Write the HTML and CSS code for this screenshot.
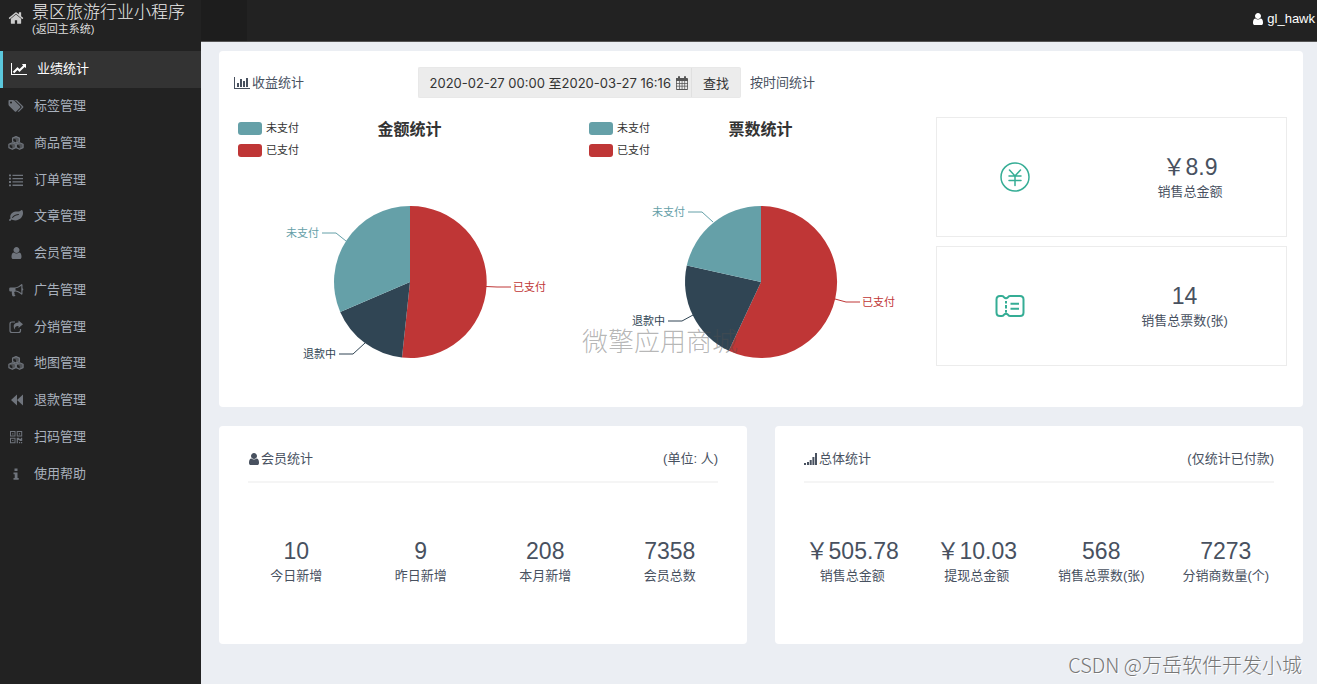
FILE: index.html
```html
<!DOCTYPE html>
<html lang="zh-CN">
<head>
<meta charset="utf-8">
<title>景区旅游行业小程序</title>
<link rel="stylesheet" href="styles.css">
</head>
<body>
<svg class="defs" aria-hidden="true">
  <symbol id="home" viewBox="0 0 1792 1792"><path d="M1472 992v480q0 26-19 45t-45 19h-384v-384h-256v384h-384q-26 0-45-19t-19-45v-480q0-1 .5-3t.5-3l575-474 575 474q1 2 1 6zm223-69l-62 74q-8 9-21 11h-3q-13 0-21-7l-692-577-692 577q-12 8-24 7-13-2-21-11l-62-74q-8-10-7-23.5t11-21.5l719-599q32-26 76-26t76 26l244 204v-195q0-14 9-23t23-9h192q14 0 23 9t9 23v408l219 182q10 8 11 21.5t-7 23.5z"/></symbol>
  <symbol id="user" viewBox="128 128 1408 1536"><path d="M1536 1399q0 109-62.5 187t-150.5 78h-854q-88 0-150.5-78t-62.5-187q0-85 8.5-160.5t31.5-152 58.5-131 94-89 134.5-34.5q131 128 313 128t313-128q76 0 134.5 34.5t94 89 58.5 131 31.5 152 8.5 160.500zm-256-887q0 159-112.5 271.5t-271.5 112.5-271.5-112.5-112.5-271.5 112.5-271.5 271.5-112.5 271.5 112.5 112.5 271.5z"/></symbol>
  <symbol id="line" viewBox="0 0 2048 1792"><path d="M2048 1536v128h-2048v-1536h128v1408h1920zm-128-1248v435q0 21-19.5 29.5t-35.5-7.5l-121-121-633 633q-10 10-23 10t-23-10l-233-233-416 416-192-192 585-585q10-10 23-10t23 10l233 233 464-464-121-121q-16-16-7.5-35.5t29.5-19.5h435q14 0 23 9t9 23z"/></symbol>
  <symbol id="bars" viewBox="0 0 2048 1792"><path d="M640 896v512h-256v-512h256zm384-512v1024h-256v-1024h256zm1024 1152v128h-2048v-1536h128v1408h1920zm-640-896v768h-256v-768h256zm384-384v1152h-256v-1152h256z"/></symbol>
  <symbol id="tags" viewBox="0 0 1920 1792"><path d="M448 448q0-53-37.5-90.5t-90.5-37.5-90.5 37.5-37.5 90.5 37.5 90.5 90.5 37.5 90.5-37.5 37.5-90.5zm1067 576q0 53-37 90l-491 492q-39 37-91 37-53 0-90-37l-715-716q-38-37-64.5-101t-26.5-117v-416q0-52 38-90t90-38h416q53 0 117 26.5t102 64.5l715 714q37 39 37 91zm384 0q0 53-37 90l-491 492q-39 37-91 37-36 0-59-14t-53-45l470-470q37-37 37-90 0-52-37-91l-715-714q-38-38-102-64.5t-117-26.5h224q53 0 117 26.5t102 64.5l715 714q37 39 37 91z"/></symbol>
  <symbol id="leaf" viewBox="0 0 1792 1792"><path d="M1280 704q0-26-19-45t-45-19q-172 0-318 49.5t-259.5 134-235.5 219.5q-19 21-19 45 0 26 19 45t45 19q24 0 45-19 27-24 74-71t67-66q137-124 268.5-176t313.5-52q26 0 45-19t19-45zm512-198q0 95-20 193-46 224-184.5 383t-357.5 268q-214 108-438 108-148 0-286-47-15-5-88-42t-96-37q-16 0-39.5 32t-45 70-52.5 70-60 32q-43 0-63.5-17.5t-45.5-59.5q-2-4-6-11t-5.5-10-3-9.5-1.5-13.5q0-35 31-73.5t68-65.5 68-56 31-48q0-4-14-38t-16-44q-9-51-9-104 0-115 43.5-220t119-184.5 170.5-139 204-95.5q55-18 145-25.5t179.5-9 178.5-6 163.5-24 113.5-56.5l29.5-29.5 29.5-28 27-20 36.5-16 43.5-4.5q39 0 70.5 46t47.5 112 24 124 8 96z"/></symbol>
  <symbol id="cubes" viewBox="0 0 18 16"><g id="cube"><path fill="none" stroke="currentColor" stroke-width="1.4" stroke-linejoin="round" d="M9 .7l3.900 1.700v3.900L9 8.200 5.100 6.300V2.400z"/><path d="M5.100 2.400L9 .7l3.900 1.700L9 4.200zM9 4.200l3.900-1.800v3.900L9 8.200z" opacity=".6"/></g><use href="#cube" x="-4.200" y="7"/><use href="#cube" x="4.200" y="7"/></symbol>
  <symbol id="list" viewBox="0 0 14 14"><path d="M0 1.500h2v1.800H0zM0 4.800h2v1.800H0zM0 8.100h2v1.800H0zM0 11.400h2v1.800H0zM3.500 1.700H14v1.300H3.500zM3.500 5H14v1.300H3.500zM3.500 8.300H14v1.300H3.500zM3.500 11.600H14v1.300H3.500z"/></symbol>
  <symbol id="horn" viewBox="0 0 14 14"><path fill-rule="evenodd" d="M12.600 1q.9 0 .9 1v3.200a1.300 1.300 0 0 1 0 2.400v3.200q0 1-.9 1C10.500 9.900 8.500 8.700 6 8.500c-1 .4-1 1.300-.3 1.900-.6.900.2 1.500 1 2.200-.6 1-2.500 1-3.300.3C3 11.300 2.500 10 2.900 8.400H1.500Q.2 8.400.2 7.200V5.600q0-1.200 1.300-1.200H5.500C8.200 4.400 10.500 3 12.600 1zM12.300 2.700C10.300 4.200 8.500 5.100 6.500 5.300v2.300c2 .2 3.800 1 5.800 2.500z"/></symbol>
  <symbol id="share" viewBox="0 0 14 14"><path fill="none" stroke="currentColor" stroke-width="1.200" d="M6 2H3Q1 2 1 4v6.500q0 2 2 2h6.500q2 0 2-2V9"/><path d="M9.500.5L14 4.300 9.500 8.100V6C6.500 6 5.500 7 6.300 10 3.500 7 4.300 2.600 9.500 2.600z"/></symbol>
  <symbol id="back" viewBox="0 0 14 14"><path d="M8 1.500v11L2 7zM14 1.500v11L8 7z"/></symbol>
  <symbol id="qr" viewBox="0 0 14 14"><path fill-rule="evenodd" d="M1 1h5.500v5.500H1zM2 2v3.500h3.500V2zM7.700 1h5.500v5.500H7.700zM8.700 2v3.500h3.500V2zM1 7.700h5.500v5.500H1zM2 8.700v3.500h3.500V8.700zM3.200 3.200h1.200v1.200H3.200zM9.900 3.200h1.200v1.200H9.900zM3.200 9.900h1.200v1.200H3.200zM7.700 7.700h2.500v1H12v-1h1.200v3.200h-2.700v-1H8.900v3.300H7.700zM10 12h1.200v1.200H10zM12 12h1.200v1.200H12z"/></symbol>
  <symbol id="info" viewBox="0 0 14 14"><path d="M5.500 1.500h3V4h-3zM4.500 5.500h4v5.500h1.200v1.700H4.500V11h1.200V7.200H4.500z"/></symbol>
  <symbol id="signal" viewBox="0 0 13 13"><path d="M0 11h2v2H0zM3 10h2v3H3zM5.700 8h2v5h-2zM8.400 5h2v8h-2zM11 1h2v12h-2z"/></symbol>
  <symbol id="calendar" viewBox="0 0 14 14"><path fill-rule="evenodd" d="M1 2h2V1q0-1 1-1t1 1v1h4V1q0-1 1-1t1 1v1h1q1 0 1 1v10q0 1-1 1H2q-1 0-1-1zM1.800 5v2H4V5zM4.700 5v2h2V5zM7.400 5v2h2V5zM10.100 5v2h2.100V5zM1.800 7.700v2H4v-2zM4.700 7.700v2h2v-2zM7.400 7.700v2h2v-2zM10.100 7.700v2h2.100v-2zM1.800 10.400v2.700H4v-2.700zM4.700 10.400v2.700h2v-2.700zM7.400 10.400v2.700h2v-2.700zM10.100 10.400v2.700h2.100v-2.700z"/></symbol>
</svg>

<aside class="sidebar">
  <a class="brand" href="#">
    <svg class="icon home-icon"><use href="#home"/></svg>
    <span class="brand-text"><span class="brand-name">景区旅游行业小程序</span><span class="brand-sub">(返回主系统)</span></span>
  </a>
  <nav class="menu">
    <a class="item active" href="#"><svg class="icon"><use href="#line"/></svg>业绩统计</a>
    <a class="item" href="#"><svg class="icon"><use href="#tags"/></svg>标签管理</a>
    <a class="item" href="#"><svg class="icon"><use href="#cubes"/></svg>商品管理</a>
    <a class="item" href="#"><svg class="icon"><use href="#list"/></svg>订单管理</a>
    <a class="item" href="#"><svg class="icon"><use href="#leaf"/></svg>文章管理</a>
    <a class="item" href="#"><svg class="icon person"><use href="#user"/></svg>会员管理</a>
    <a class="item" href="#"><svg class="icon"><use href="#horn"/></svg>广告管理</a>
    <a class="item" href="#"><svg class="icon"><use href="#share"/></svg>分销管理</a>
    <a class="item" href="#"><svg class="icon"><use href="#cubes"/></svg>地图管理</a>
    <a class="item" href="#"><svg class="icon"><use href="#back"/></svg>退款管理</a>
    <a class="item" href="#"><svg class="icon"><use href="#qr"/></svg>扫码管理</a>
    <a class="item" href="#"><svg class="icon"><use href="#info"/></svg>使用帮助</a>
  </nav>
</aside>

<div class="page">
  <header class="topbar">
    <button class="toggle" type="button" aria-label="菜单"></button>
    <a class="account" href="#"><svg class="icon narrow"><use href="#user"/></svg>gl_hawk</a>
  </header>

  <main class="main">
    <section class="card income">
      <div class="filters">
        <h2 class="heading"><svg class="icon"><use href="#bars"/></svg>收益统计</h2>
        <div class="controls">
          <div class="group">
            <button class="btn range" type="button">2020-02-27 00:00 至2020-03-27 16:16<svg class="icon calendar"><use href="#calendar"/></svg></button>
            <button class="btn" type="button">查找</button>
          </div>
          <a class="by-time" href="#">按时间统计</a>
        </div>
      </div>
      <div class="columns">
        <div class="chart">
          <div class="chart-head">
            <ul class="legend"><li><i class="swatch teal"></i>未支付</li><li><i class="swatch red"></i>已支付</li></ul>
            <h3 class="chart-title">金额统计</h3>
          </div>
          <svg class="pie" viewBox="-176 -122 351 232">
            <path class="red-fill" d="M0 0V-76A76 76 0 1 1 -8 75.500z"/>
            <path class="navy-fill" d="M0 0L-8 75.500A76 76 0 0 1 -69.800 30z"/>
            <path class="teal-fill" d="M0 0L-69.800 30A76 76 0 0 1 0 -76z"/>
            <path class="lead red-line" d="M76 4.500L87 5H101"/><text class="red-fill" x="103" y="9">已支付</text>
            <path class="lead navy-line" d="M-45 61L-57 72H-71"/><text class="navy-fill end" x="-74" y="76">退款中</text>
            <path class="lead teal-line" d="M-64 -41L-74 -49H-88"/><text class="teal-fill end" x="-91" y="-45">未支付</text>
          </svg>
        </div>
        <div class="chart">
          <div class="chart-head">
            <ul class="legend"><li><i class="swatch teal"></i>未支付</li><li><i class="swatch red"></i>已支付</li></ul>
            <h3 class="chart-title">票数统计</h3>
          </div>
          <svg class="pie" viewBox="-176 -122 351 232">
            <path class="red-fill" d="M0 0V-76A76 76 0 1 1 -32.200 68.800z"/>
            <path class="navy-fill" d="M0 0L-32.200 68.800A76 76 0 0 1 -74.200 -16.400z"/>
            <path class="teal-fill" d="M0 0L-74.200 -16.400A76 76 0 0 1 0 -76z"/>
            <path class="lead red-line" d="M74 17L85 20H99"/><text class="red-fill" x="101" y="24">已支付</text>
            <path class="lead navy-line" d="M-68 33L-79 39H-93"/><text class="navy-fill end" x="-96" y="43">退款中</text>
            <path class="lead teal-line" d="M-48 -60L-59 -70H-73"/><text class="teal-fill end" x="-76" y="-66">未支付</text>
          </svg>
        </div>
        <div class="totals">
          <div class="total">
            <svg class="total-icon" viewBox="0 0 30 30"><circle cx="15" cy="15" r="14"/><path d="M9.500 8l5.500 6 5.500-6M15 14v9.500M9 14h12M9 18.500h12"/></svg>
            <div class="stat"><strong>￥8.9</strong><span>销售总金额</span></div>
          </div>
          <div class="total">
            <svg class="total-icon ticket" viewBox="0 0 30 30"><path d="M5 5h2q1.500 0 2 1.300Q11 8.200 13 6.300 13.500 5 15 5h10q3.500 0 3.500 3.500v13q0 3.500-3.500 3.500H15q-1.500 0-2-1.300-2-1.900-4 0Q8.500 25 7 25H5q-3.500 0-3.500-3.500v-13Q1.500 5 5 5zM11 10v2.500M11 14v3.500M11 19v2.500M15.500 12.700H24M15.500 17.700H24"/></svg>
            <div class="stat"><strong>14</strong><span>销售总票数(张)</span></div>
          </div>
        </div>
      </div>
      <div class="shop-mark">微擎应用商城</div>
    </section>

    <div class="pair">
      <section class="card summary">
        <div class="summary-head"><h2 class="heading"><svg class="icon narrow"><use href="#user"/></svg>会员统计</h2><span>(单位: 人)</span></div>
        <div class="stats">
          <div class="stat"><strong>10</strong><span>今日新增</span></div>
          <div class="stat"><strong>9</strong><span>昨日新增</span></div>
          <div class="stat"><strong>208</strong><span>本月新增</span></div>
          <div class="stat"><strong>7358</strong><span>会员总数</span></div>
        </div>
      </section>
      <section class="card summary">
        <div class="summary-head"><h2 class="heading"><svg class="icon signal"><use href="#signal"/></svg>总体统计</h2><span>(仅统计已付款)</span></div>
        <div class="stats">
          <div class="stat"><strong>￥505.78</strong><span>销售总金额</span></div>
          <div class="stat"><strong>￥10.03</strong><span>提现总金额</span></div>
          <div class="stat"><strong>568</strong><span>销售总票数(张)</span></div>
          <div class="stat"><strong>7273</strong><span>分销商数量(个)</span></div>
        </div>
      </section>
    </div>
  </main>
  <div class="credit">CSDN @万岳软件开发小城</div>
</div>
</body>
</html>
```
FILE: styles.css
```css
* { box-sizing: border-box; }

body {
  margin: 0;
  min-height: 100vh;
  display: flex;
  background: #ebeef3;
  color: #48515f;
  font: 13px/20px "Liberation Sans", "Noto Sans CJK SC", sans-serif;
}

a { color: inherit; text-decoration: none; }
h2, h3, ul { margin: 0; padding: 0; font-weight: 400; list-style: none; }
.defs { position: absolute; width: 0; height: 0; }
.icon { width: 16px; height: 14px; fill: currentColor; flex: none; }

/* Sidebar */
.sidebar { width: 201px; flex: none; background: #222; color: #a9b1bd; }
.brand { display: flex; gap: 8px; height: 51px; padding: 4px 8px 0; color: #eee; }
.home-icon { height: 16px; margin-top: 6px; color: #ccc; }
.brand-text { display: flex; flex-direction: column; font-weight: 300; }
.brand-name { font-size: 17px; line-height: 18px; white-space: nowrap; }
.brand-sub { font-size: 11px; line-height: 14px; font-weight: 400; color: #ddd; }
.menu { display: grid; grid-auto-rows: 1fr; height: 441px; }
.item { display: flex; align-items: center; gap: 10px; padding-left: 8px; }
.item .icon { color: #6f747c; }
.item .person { height: 12px; }
.item.active { border-left: 3px solid #5bc8dd; background: #333; color: #fff; }
.active .icon { color: #fff; }

/* Top bar */
.page { position: relative; flex: 1; min-width: 0; }
.topbar { display: flex; justify-content: space-between; height: 42px; background: #222; border-bottom: 1px solid #555; }
.toggle { width: 46px; border: 0; background: #1d1d1d; }
.account { display: flex; align-items: center; gap: 4px; padding: 0 2px 4px 0; color: #fff; }

/* Cards */
.main { display: grid; gap: 19px; padding: 9px 14px 40px 18px; }
.card { background: #fff; border-radius: 4px; }
.heading { display: flex; align-items: center; gap: 2px; font-size: 13px; }
.narrow { width: 11px; height: 12px; }
.signal { width: 13px; height: 13px; }

.income { position: relative; padding: 16px 16px 15px 15px; }
.filters { display: grid; grid-template-columns: 1fr 5fr; margin-bottom: 19px; }
.controls { display: flex; align-items: center; gap: 9px; padding-left: 8px; }
.group { display: flex; }
.btn {
  display: flex;
  align-items: center;
  gap: 3px;
  height: 31px;
  padding: 0 11px;
  border: 1px solid #e8e8e8;
  border-left-width: 0;
  border-radius: 0 2px 2px 0;
  background: #ececec;
  color: #333;
  font: 13px/20px Inter, "Noto Sans CJK SC", sans-serif;
}
.range { border-left-width: 1px; border-right-color: #e0e0e0; border-radius: 2px 0 0 2px; padding-right: 1px; }
.calendar { color: #555; }
.columns { display: grid; grid-template-columns: repeat(3, 1fr); }

/* Charts */
.chart-head { display: grid; grid-template-columns: 1fr auto 1fr; height: 43px; color: #333; }
.legend { display: grid; align-content: start; padding-left: 4px; font-size: 11px; line-height: 22px; }
.legend li { display: flex; align-items: center; gap: 4px; }
.swatch { width: 24px; height: 13px; border-radius: 3px; }
.teal { background: #65a0a8; }
.red { background: #bf3636; }
.chart-title { font-size: 16px; line-height: 26px; font-weight: 700; }
.pie { display: block; width: 100%; overflow: visible; font-size: 11px; }
.red-fill { fill: #bf3636; }
.navy-fill { fill: #304554; }
.teal-fill { fill: #65a0a8; }
.lead { fill: none; stroke-width: 1; }
.red-line { stroke: #bf3636; }
.navy-line { stroke: #304554; }
.teal-line { stroke: #65a0a8; }
.end { text-anchor: end; }

/* Totals and counters */
.totals { display: grid; gap: 9px; align-content: start; }
.total { display: flex; align-items: center; justify-content: space-around; min-height: 120px; border: 1px solid #ececec; }
.total-icon { width: 30px; height: 30px; fill: none; stroke: #35ad95; stroke-width: 1.5; stroke-linecap: round; }
.ticket { stroke-width: 2; stroke-linecap: butt; }
.stat { display: flex; flex-direction: column; align-items: center; white-space: nowrap; }
.stat strong { font-size: 23px; line-height: 30px; font-weight: 400; }

.pair { display: grid; grid-template-columns: 1fr 1fr; gap: 28px; }
.summary { padding: 0 15px; }
.summary-head {
  display: flex;
  justify-content: space-between;
  align-items: center;
  height: 57px;
  margin: 0 14px;
  padding-top: 10px;
  border-bottom: 2px solid #f5f5f5;
}
.stats { display: grid; grid-template-columns: repeat(4, 1fr); padding: 53px 0 58px; }

/* Overlaid marks */
.shop-mark { position: absolute; left: 363px; top: 275px; font-size: 26px; line-height: 32px; font-weight: 300; color: rgba(80, 80, 80, .42); }
.credit { position: absolute; right: 15px; bottom: 5px; font-size: 20px; line-height: 28px; font-family: "Noto Sans CJK SC", sans-serif; font-weight: 300; color: #777; text-shadow: 1px 1px #fff; }
```
